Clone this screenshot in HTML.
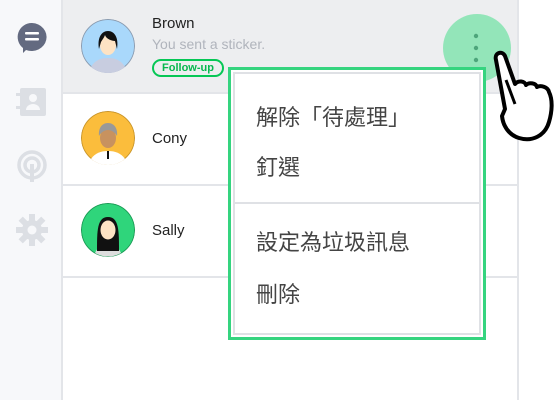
<!DOCTYPE html>
<html><head><meta charset="utf-8"><style>
*{margin:0;padding:0;box-sizing:border-box}
body{width:560px;height:400px;overflow:hidden;background:#fff;font-family:"Liberation Sans","Noto Sans CJK TC",sans-serif;position:relative}
.side{position:absolute;left:0;top:0;width:63px;height:400px;background:#f7f8fa;border-right:2px solid #e3e5e9}
.list{position:absolute;left:63px;top:0;width:456px;height:400px;border-right:2px solid #e3e5e9}
.row{position:absolute;left:0;width:454px;height:92px;border-bottom:2px solid #e3e5e9}
.av{position:absolute;left:18px;width:54px;height:54px;border-radius:50%}
.name{position:absolute;left:89px;font-size:15px;color:#222}
.menu{position:absolute;left:228px;top:67px;width:258px;height:273px;border:3px solid #35d47f;background:#fff}
.inner{position:absolute;left:2px;top:2px;right:2px;bottom:2px;border:2px solid #dfe1e5}
.it{position:absolute;left:21px;font-size:22px;color:#444;line-height:24px;font-family:"Liberation Sans","Noto Sans CJK TC",sans-serif}
</style></head><body>
<div class="side">
<svg width="63" height="400" style="position:absolute;left:0;top:0">
<path d="M32 23a15 14 0 1 1-6 27l-3 3v-5a14 14 0 0 1 9-25z" fill="#636a80"/>
<rect x="25" y="32" width="14" height="2.5" rx="1" fill="#fff"/><rect x="25" y="38" width="14" height="2.5" rx="1" fill="#fff"/>
<rect x="20" y="88" width="26" height="28" rx="2" fill="#dcdfe4"/><rect x="16" y="93" width="5" height="3" fill="#dcdfe4"/><rect x="16" y="106" width="5" height="3" fill="#dcdfe4"/>
<circle cx="33" cy="98" r="4" fill="#f7f8fa"/><path d="M26 110a7 6 0 0 1 14 0z" fill="#f7f8fa"/>
<circle cx="32" cy="165" r="13" fill="none" stroke="#dcdfe4" stroke-width="3.5"/><circle cx="32" cy="165" r="7" fill="none" stroke="#dcdfe4" stroke-width="3.5"/><rect x="30" y="164" width="4" height="18" fill="#dcdfe4"/>
<g transform="translate(32,230)" fill="#dcdfe4"><circle r="10"/><g><rect x="-3" y="-16" width="6" height="32"/><rect x="-3" y="-16" width="6" height="32" transform="rotate(45)"/><rect x="-3" y="-16" width="6" height="32" transform="rotate(90)"/><rect x="-3" y="-16" width="6" height="32" transform="rotate(135)"/></g><circle r="4.5" fill="#f7f8fa"/></g>
</svg>
</div>
<div class="list">
<div class="row" style="top:0;background:#edeef0;height:94px">
<svg class="av" style="top:19px" viewBox="0 0 54 54"><circle cx="27" cy="27" r="26.5" fill="#a9d8fb" stroke="#8a9bb0" stroke-width="1"/><path d="M10 48c4-7 10-9 17-9s13 2 17 9a26 26 0 0 1-34 0z" fill="#c8cde0"/><ellipse cx="27" cy="26" rx="8" ry="10" fill="#fde3c4"/><path d="M18 30c-2-12 3-18 9-18s11 6 9 18l-2-8c-3 0-9-2-10-6-1 3-3 5-4 7z" fill="#111"/></svg>
<div class="name" style="top:15px">Brown</div>
<div style="position:absolute;left:89px;top:36px;font-size:14px;color:#b0b4bc">You sent a sticker.</div>
<div style="position:absolute;left:89px;top:59px;width:72px;height:18px;border:2px solid #06c755;border-radius:9px;font-size:11px;font-weight:bold;color:#06b84e;text-align:center;line-height:14px">Follow-up</div>
</div>
<div class="row" style="top:94px;height:92px">
<svg class="av" style="top:17px" viewBox="0 0 54 54"><circle cx="27" cy="27" r="26.5" fill="#fbbd3c" stroke="#c9952a"/><path d="M10 48c4-6 10-8 17-8s13 2 17 8a26 26 0 0 1-34 0z" fill="#fff"/><ellipse cx="27" cy="27" rx="8" ry="10" fill="#c8925f"/><path d="M18 25c-1-9 4-13 9-13s10 4 9 13c-2-4-6-6-9-6s-7 2-9 6z" fill="#999"/><path d="M27 40v8" stroke="#111" stroke-width="2"/></svg>
<div class="name" style="top:36px">Cony</div>
</div>
<div class="row" style="top:186px;height:92px">
<svg class="av" style="top:17px" viewBox="0 0 54 54"><circle cx="27" cy="27" r="26.5" fill="#2fd57b" stroke="#1a9b55"/><path d="M14 50c3-7 8-9 13-9s10 2 13 9a26 26 0 0 1-26 0z" fill="#ddd"/><path d="M16 48c0-20 0-34 11-34s11 14 11 34z" fill="#111"/><ellipse cx="27" cy="27" rx="7.5" ry="9.5" fill="#fde3c4"/></svg>
<div class="name" style="top:36px">Sally</div>
</div>
</div>
<svg width="560" height="400" style="position:absolute;left:0;top:0">
<circle cx="477" cy="48" r="34" fill="#93e5b9"/>
<circle cx="476" cy="36" r="2.2" fill="#4ea57b"/><circle cx="476" cy="48" r="2.2" fill="#4ea57b"/><circle cx="476" cy="60" r="2.2" fill="#4ea57b"/>
</svg>
<div class="menu"><div class="inner">
<div class="it" style="top:32px">解除「待處理」</div>
<div class="it" style="top:82px">釘選</div>
<div style="position:absolute;left:0;right:0;top:128px;border-top:2px solid #dfe1e5"></div>
<div class="it" style="top:157px">設定為垃圾訊息</div>
<div class="it" style="top:209px">刪除</div>
</div></div>
<svg width="560" height="400" style="position:absolute;left:0;top:0">
<path d="M496 60c-2-7 6-10 9-4l10 28c3-4 10-3 11 1c3-3 10-2 11 2c4-2 11 0 12 5c4 8 3 20 0 30c-4 14-17 20-30 16c-10-3-16-12-17-22l3-7z" fill="#fff" stroke="#000" stroke-width="4" stroke-linejoin="round"/>
<path d="M506 80l9 24" stroke="#000" stroke-width="3"/>
</svg>
</body></html>
